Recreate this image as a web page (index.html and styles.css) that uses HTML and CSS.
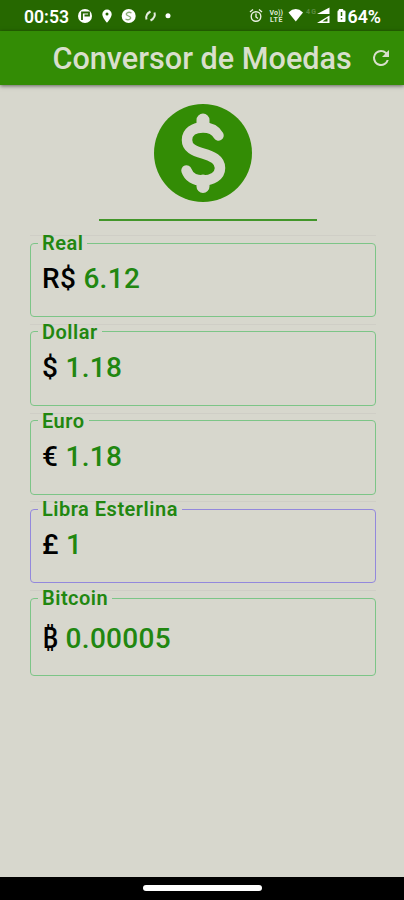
FILE: index.html
```html
<!DOCTYPE html>
<html lang="pt-BR">
<head>
    <meta charset="UTF-8">
    <meta name="viewport" content="width=device-width, initial-scale=1.0">
    <title>Conversor de Moedas</title>
    <link rel="stylesheet" href="styles.css">
</head>
<body>
    <div class="status">
        <svg class="status-icons" width="404" height="31" viewBox="0 0 404 31">
            <text class="clock" x="24" y="22.5" textLength="45" lengthAdjust="spacingAndGlyphs">00:53</text>
            <g fill="#fff">
                <circle cx="85" cy="16" r="7"/>
                <path d="M107 9.5a4.7 4.7 0 0 0-4.7 4.7c0 3.3 4.7 8.6 4.7 8.6s4.7-5.3 4.7-8.6a4.7 4.7 0 0 0-4.7-4.7z"/>
                <circle cx="128.7" cy="16" r="7"/>
                <circle cx="168" cy="15.7" r="2.5"/>
                <path d="M288.5 12.5q7.2-6.8 14.5 0l-7.2 9z"/>
                <path d="M329.5 7.5v6.5h-12.5zM329.5 15.5v7.5h-12.5z"/>
                <path d="M339 9h4l.5 1.5h1q1 0 1 1v9.5q0 1-1 1h-6q-1 0-1-1V11.500q0-1 1-1z"/>
            </g>
            <path d="M82 20v-7.500h7v3h-4.500" fill="none" stroke="#266800" stroke-width="1.800"/>
            <circle cx="107" cy="14" r="1.500" fill="#266800"/>
            <path d="M131.500 13q-2.500-1.500-4.500 0t1.500 3 1.500 3-4.500 0" fill="none" stroke="#8caf78" stroke-width="1.300"/>
            <path d="M146.500 19.500q-1.500-5 4-8M154.500 12.500q1.500 5-4 8" fill="none" stroke="#e3ecdd" stroke-width="2"/>
            <g fill="none" stroke="#e8efe2" stroke-width="1.400">
                <circle cx="256" cy="16.500" r="4.800"/>
                <path d="M256 13.500v3.500l2 1.500M250 12l3-2.500M262 12l-3-2.500"/>
            </g>
            <path d="M327.500 18v3.500h-5z" fill="#266800"/>
            <path d="M341.500 12v4M341.500 18v1.500" stroke="#266800" stroke-width="1.500"/>
            <text class="tiny" x="269.500" y="14.500" textLength="13.500">Vo))</text>
            <text class="tiny" x="270" y="21.500" textLength="12.500">LTE</text>
            <text class="tiny faint" x="306" y="14" textLength="10">4G</text>
            <text class="clock" x="347.500" y="22.500" textLength="33.500" lengthAdjust="spacingAndGlyphs">64%</text>
        </svg>
    </div>
    <header class="appbar">
        <h1>Conversor de Moedas</h1>
        <svg class="refresh" width="24" height="24" viewBox="0 0 24 24">
            <path fill="#d9dfcc" d="M17.650 6.350A7.958 7.958 0 0 0 12 4a8 8 0 1 0 7.730 10h-2.080A6 6 0 1 1 12 6c1.660 0 3.140.690 4.220 1.780L13 11h7V4z"/>
        </svg>
    </header>

    <main class="container">
        <svg class="coin" width="98" height="98" viewBox="0 0 98 98">
            <circle cx="49" cy="49" r="49" fill="#338c05"/>
            <g fill="none" stroke="#d7d7cd" stroke-linecap="round">
                <path stroke-width="10.500" d="M64.500 31.500C61 25 55 23.500 49 23.500C40 23.500 33 28 33 36C33 44 40 47 49 49.500C58 52 66 55.500 66 64C66 72 58 76.500 49 76.500C41 76.500 35 73.500 32.500 66.500"/>
                <path stroke-width="13" d="M49 16v5M49 77v5.500"/>
            </g>
        </svg>
        <hr class="line">

        <div class="slot">
            <fieldset class="field">
                <legend>Real</legend>
                <p><span class="prefix">R$</span> 6.12</p>
            </fieldset>
        </div>
        <div class="slot">
            <fieldset class="field">
                <legend>Dollar</legend>
                <p><span class="prefix">$</span> 1.18</p>
            </fieldset>
        </div>
        <div class="slot">
            <fieldset class="field">
                <legend>Euro</legend>
                <p><span class="prefix">€</span> 1.18</p>
            </fieldset>
        </div>
        <div class="slot">
            <fieldset class="field active">
                <legend>Libra Esterlina</legend>
                <p><span class="prefix">£</span> 1</p>
            </fieldset>
        </div>
        <div class="slot">
            <fieldset class="field tall">
                <legend>Bitcoin</legend>
                <p><span class="prefix">₿</span> 0.00005</p>
            </fieldset>
        </div>
    </main>

    <footer class="navbar">
        <div class="handle"></div>
    </footer>
</body>
</html>
```

FILE: styles.css
```css
* {
    box-sizing: border-box;
}
body {
    margin: 0;
    height: 900px;
    display: flex;
    flex-direction: column;
    overflow: hidden;
    background-color: #d7d7cd;
    font-family: Roboto, "Noto Sans", sans-serif;
}
.status {
    height: 31px;
    background-color: #266800;
}
.status-icons {
    display: block;
}
.clock {
    fill: #fff;
    font-size: 18.5px;
    font-weight: 600;
}
.tiny {
    fill: #dfe8d8;
    font-size: 7px;
    font-weight: 700;
}
.faint {
    fill: #5c8c40;
}
.appbar {
    height: 54px;
    padding: 0 11px 0 52.5px;
    display: flex;
    align-items: center;
    justify-content: space-between;
    background-color: #338c05;
    box-shadow: 0 1px 4px rgba(0, 0, 0, 0.55);
}
h1 {
    margin: 0;
    color: #d9dfcc;
    font-size: 30.6px;
    font-weight: 500;
    white-space: nowrap;
}
.container {
    flex: 1;
    padding: 19px 28px 0 30px;
}
.coin {
    display: block;
    margin: 0 auto;
}
.line {
    width: 218px;
    height: 2px;
    margin: 17px 0 14px 69px;
    border: none;
    background-color: #42962a;
}
.slot {
    height: 88.75px;
    border-top: 1px solid #cfcec6;
}
.field {
    height: 84px;
    margin: -3px 0 0;
    padding: 0 0 0 7px;
    border: 1px solid #7cc587;
    border-radius: 4px;
}
.field.active {
    border-color: #9388dc;
}
.field.tall {
    height: 88px;
}
legend {
    padding: 0 4px;
    color: #218710;
    font-size: 20px;
    line-height: 20px;
    font-weight: 600;
    letter-spacing: 0.5px;
}
.field p {
    margin: 9px 0 0 4px;
    color: #218710;
    font-size: 28px;
    line-height: 34px;
    font-weight: 500;
    letter-spacing: 0.3px;
}
.field.tall p {
    margin-top: 14px;
}
.prefix {
    color: #000;
}
.navbar {
    height: 23px;
    display: flex;
    justify-content: center;
    background-color: #000;
}
.handle {
    width: 119px;
    height: 6px;
    margin-top: 8px;
    border-radius: 3px;
    background-color: #fff;
}
```
